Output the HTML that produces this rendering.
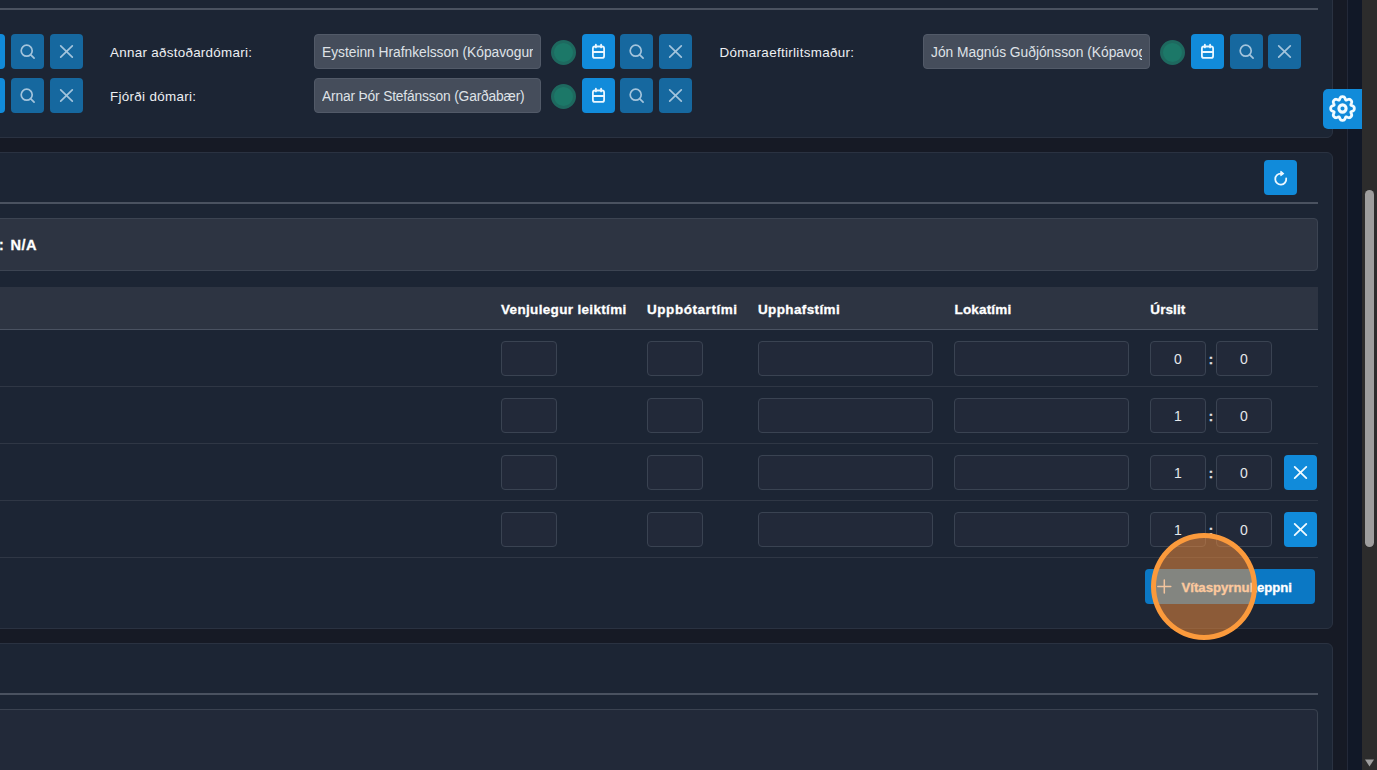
<!DOCTYPE html>
<html lang="is">
<head>
<meta charset="utf-8">
<title>Leikskýrsla</title>
<style>
*{box-sizing:border-box;margin:0;padding:0}
html,body{width:1377px;height:770px;overflow:hidden;background:#161a25}
body{position:relative;font-family:"Liberation Sans",sans-serif;color:#e5e7eb;font-size:13px}
.abs{position:absolute}
.card{position:absolute;left:-40px;width:1373px;background:#1c2534;border:1px solid #2a3241;border-radius:6px}
.hr{position:absolute;left:-40px;width:1358px;height:2px;background:#4a5260}
.gutter2{position:absolute;left:1347px;top:0;width:15px;height:770px;background:#111827;border-left:1px solid #232939}
.track{position:absolute;left:1362px;top:0;width:15px;height:770px;background:#2c2c2c}
.thumb{position:absolute;left:1365px;top:190px;width:9px;height:357px;border-radius:4.5px;background:#9e9e9e}
.btn{position:absolute;width:33px;height:35px;border-radius:4px;background:#118bda}
.btn.dim{background:#16689f}
.btn svg{position:absolute;left:0;top:0}
.lbl{position:absolute;font-size:13.4px;color:#eef0f3;white-space:nowrap;line-height:16px}
.dis{position:absolute;width:227px;height:35px;border-radius:4px;background:#454d5b;border:1px solid #525a68;color:#dfe2e7;font-size:13.8px;line-height:35px;padding:0 7px;white-space:nowrap}
.dis span{display:block;width:211px;overflow:hidden;white-space:nowrap}
.dot{position:absolute;width:25px;height:25px;border-radius:50%;background:#1c7868;border:3px solid #1e695f}
.box{position:absolute;background:#2d3442;border:1px solid #3c4452;border-radius:4px}
.th{position:absolute;font-weight:bold;font-size:13.5px;-webkit-text-stroke:0.3px #fff;color:#fff;white-space:nowrap;line-height:16px}
.inp{position:absolute;height:35px;border-radius:4px;background:#222939;border:1px solid #3a4352;color:#e5e7eb;font-size:14px;line-height:35px;text-align:center}
.sep{position:absolute;left:-40px;width:1358px;height:1px;background:#2f3745}
</style>
</head>
<body>
<!-- card 1 -->
<div class="card" style="top:-60px;height:198px"></div>
<div class="hr" style="top:8px"></div>
<div class="btn" style="left:-28px;top:34px"><svg width="33" height="35" viewBox="0 0 33 35" fill="none" stroke="#eaf7ff" stroke-width="1.8" stroke-linecap="round" stroke-linejoin="round"><rect x="10.9" y="12.5" width="11.2" height="11.4" rx="2"/><path d="M13.9 10.7V13.4M19.1 10.7V13.4M10.9 18H22.1"/></svg></div>
<div class="btn dim" style="left:11px;top:34px"><svg width="33" height="35" viewBox="0 0 33 35" fill="none" stroke="#a3c4dc" stroke-width="1.7" stroke-linecap="round"><circle cx="15.7" cy="16.7" r="5.5"/><path d="M19.8 20.8L23.1 24.1"/></svg></div>
<div class="btn dim" style="left:50px;top:34px"><svg width="33" height="35" viewBox="0 0 33 35" fill="none" stroke="#a3c4dc" stroke-width="1.7" stroke-linecap="round"><path d="M10.7 11.9L22.3 23.1M22.3 11.9L10.7 23.1"/></svg></div>
<div class="btn" style="left:582px;top:34px"><svg width="33" height="35" viewBox="0 0 33 35" fill="none" stroke="#eaf7ff" stroke-width="1.8" stroke-linecap="round" stroke-linejoin="round"><rect x="10.9" y="12.5" width="11.2" height="11.4" rx="2"/><path d="M13.9 10.7V13.4M19.1 10.7V13.4M10.9 18H22.1"/></svg></div>
<div class="btn dim" style="left:620px;top:34px"><svg width="33" height="35" viewBox="0 0 33 35" fill="none" stroke="#a3c4dc" stroke-width="1.7" stroke-linecap="round"><circle cx="15.7" cy="16.7" r="5.5"/><path d="M19.8 20.8L23.1 24.1"/></svg></div>
<div class="btn dim" style="left:659px;top:34px"><svg width="33" height="35" viewBox="0 0 33 35" fill="none" stroke="#a3c4dc" stroke-width="1.7" stroke-linecap="round"><path d="M10.7 11.9L22.3 23.1M22.3 11.9L10.7 23.1"/></svg></div>
<div class="dot" style="left:551px;top:39.5px"></div>
<div class="btn" style="left:-28px;top:78px"><svg width="33" height="35" viewBox="0 0 33 35" fill="none" stroke="#eaf7ff" stroke-width="1.8" stroke-linecap="round" stroke-linejoin="round"><rect x="10.9" y="12.5" width="11.2" height="11.4" rx="2"/><path d="M13.9 10.7V13.4M19.1 10.7V13.4M10.9 18H22.1"/></svg></div>
<div class="btn dim" style="left:11px;top:78px"><svg width="33" height="35" viewBox="0 0 33 35" fill="none" stroke="#a3c4dc" stroke-width="1.7" stroke-linecap="round"><circle cx="15.7" cy="16.7" r="5.5"/><path d="M19.8 20.8L23.1 24.1"/></svg></div>
<div class="btn dim" style="left:50px;top:78px"><svg width="33" height="35" viewBox="0 0 33 35" fill="none" stroke="#a3c4dc" stroke-width="1.7" stroke-linecap="round"><path d="M10.7 11.9L22.3 23.1M22.3 11.9L10.7 23.1"/></svg></div>
<div class="btn" style="left:582px;top:78px"><svg width="33" height="35" viewBox="0 0 33 35" fill="none" stroke="#eaf7ff" stroke-width="1.8" stroke-linecap="round" stroke-linejoin="round"><rect x="10.9" y="12.5" width="11.2" height="11.4" rx="2"/><path d="M13.9 10.7V13.4M19.1 10.7V13.4M10.9 18H22.1"/></svg></div>
<div class="btn dim" style="left:620px;top:78px"><svg width="33" height="35" viewBox="0 0 33 35" fill="none" stroke="#a3c4dc" stroke-width="1.7" stroke-linecap="round"><circle cx="15.7" cy="16.7" r="5.5"/><path d="M19.8 20.8L23.1 24.1"/></svg></div>
<div class="btn dim" style="left:659px;top:78px"><svg width="33" height="35" viewBox="0 0 33 35" fill="none" stroke="#a3c4dc" stroke-width="1.7" stroke-linecap="round"><path d="M10.7 11.9L22.3 23.1M22.3 11.9L10.7 23.1"/></svg></div>
<div class="dot" style="left:551px;top:83.5px"></div>
<div class="btn" style="left:1191px;top:34px"><svg width="33" height="35" viewBox="0 0 33 35" fill="none" stroke="#eaf7ff" stroke-width="1.8" stroke-linecap="round" stroke-linejoin="round"><rect x="10.9" y="12.5" width="11.2" height="11.4" rx="2"/><path d="M13.9 10.7V13.4M19.1 10.7V13.4M10.9 18H22.1"/></svg></div>
<div class="btn dim" style="left:1230px;top:34px"><svg width="33" height="35" viewBox="0 0 33 35" fill="none" stroke="#a3c4dc" stroke-width="1.7" stroke-linecap="round"><circle cx="15.7" cy="16.7" r="5.5"/><path d="M19.8 20.8L23.1 24.1"/></svg></div>
<div class="btn dim" style="left:1268px;top:34px"><svg width="33" height="35" viewBox="0 0 33 35" fill="none" stroke="#a3c4dc" stroke-width="1.7" stroke-linecap="round"><path d="M10.7 11.9L22.3 23.1M22.3 11.9L10.7 23.1"/></svg></div>
<div class="dot" style="left:1160px;top:39.5px"></div>
<div class="lbl" style="left:110px;top:45px;letter-spacing:0.290px">Annar aðstoðardómari:</div>
<div class="lbl" style="left:110px;top:89px;letter-spacing:0.317px">Fjórði dómari:</div>
<div class="lbl" style="left:719.6px;top:45px;letter-spacing:0.319px">Dómaraeftirlitsmaður:</div>
<div class="dis" style="left:314px;top:34px"><span style="display:block;letter-spacing:-0.025px">Eysteinn Hrafnkelsson (Kópavogur)</span></div>
<div class="dis" style="left:314px;top:78px"><span style="display:block;letter-spacing:-0.171px">Arnar Þór Stefánsson (Garðabær)</span></div>
<div class="dis" style="left:923px;top:34px"><span style="display:block;letter-spacing:-0.012px">Jón Magnús Guðjónsson (Kópavogur)</span></div>
<!-- card 2 -->
<div class="card" style="top:152px;height:477px"></div>
<div class="hr" style="top:202px"></div>
<div class="btn" style="left:1264px;top:160px"><svg width="33" height="35" viewBox="0 0 33 35" fill="none" stroke="#eaf7ff" stroke-width="1.8" stroke-linecap="round" stroke-linejoin="round"><path d="M22.2 18.4A5.5 5.5 0 1 1 16.9 13.6"/><path d="M16.9 11.4L19.6 13.6L16.9 15.6Z" fill="#eaf7ff" stroke-width="1.2"/></svg></div>
<div class="box" style="left:-40px;top:218px;width:1358px;height:53px"></div>
<div class="th" style="left:-1px;top:237px;font-size:14px">:</div>
<div class="th" style="left:10.4px;top:237px;font-size:14.6px;letter-spacing:0.486px">N/A</div>
<div class="abs" style="left:-40px;top:287px;width:1358px;height:43px;background:#2d3442;border-bottom:1px solid #4a5261"></div>
<div class="th" style="left:501px;top:302px;letter-spacing:0.332px">Venjulegur leiktími</div>
<div class="th" style="left:647px;top:302px;letter-spacing:0.550px">Uppbótartími</div>
<div class="th" style="left:758px;top:302px;letter-spacing:0.371px">Upphafstími</div>
<div class="th" style="left:954.5px;top:302px;letter-spacing:0.161px">Lokatími</div>
<div class="th" style="left:1150.3px;top:302px;letter-spacing:0.081px">Úrslit</div>
<div class="inp" style="left:501px;top:341px;width:56px"></div>
<div class="inp" style="left:647px;top:341px;width:56px"></div>
<div class="inp" style="left:758px;top:341px;width:175px"></div>
<div class="inp" style="left:954px;top:341px;width:175px"></div>
<div class="inp" style="left:1150px;top:341px;width:56px">0</div>
<div class="abs" style="left:1206px;top:352px;width:10px;text-align:center;font-size:13px;line-height:16px;font-weight:bold;-webkit-text-stroke:0.3px #e5e7eb;color:#e5e7eb">:</div>
<div class="inp" style="left:1216px;top:341px;width:56px">0</div>
<div class="sep" style="top:386px"></div>
<div class="inp" style="left:501px;top:398px;width:56px"></div>
<div class="inp" style="left:647px;top:398px;width:56px"></div>
<div class="inp" style="left:758px;top:398px;width:175px"></div>
<div class="inp" style="left:954px;top:398px;width:175px"></div>
<div class="inp" style="left:1150px;top:398px;width:56px">1</div>
<div class="abs" style="left:1206px;top:409px;width:10px;text-align:center;font-size:13px;line-height:16px;font-weight:bold;-webkit-text-stroke:0.3px #e5e7eb;color:#e5e7eb">:</div>
<div class="inp" style="left:1216px;top:398px;width:56px">0</div>
<div class="sep" style="top:443px"></div>
<div class="inp" style="left:501px;top:455px;width:56px"></div>
<div class="inp" style="left:647px;top:455px;width:56px"></div>
<div class="inp" style="left:758px;top:455px;width:175px"></div>
<div class="inp" style="left:954px;top:455px;width:175px"></div>
<div class="inp" style="left:1150px;top:455px;width:56px">1</div>
<div class="abs" style="left:1206px;top:466px;width:10px;text-align:center;font-size:13px;line-height:16px;font-weight:bold;-webkit-text-stroke:0.3px #e5e7eb;color:#e5e7eb">:</div>
<div class="inp" style="left:1216px;top:455px;width:56px">0</div>
<div class="sep" style="top:500px"></div>
<div class="btn" style="left:1284px;top:455px"><svg width="33" height="35" viewBox="0 0 33 35" fill="none" stroke="#f2fbff" stroke-width="1.8" stroke-linecap="round"><path d="M10.7 11.9L22.3 23.1M22.3 11.9L10.7 23.1"/></svg></div>
<div class="inp" style="left:501px;top:512px;width:56px"></div>
<div class="inp" style="left:647px;top:512px;width:56px"></div>
<div class="inp" style="left:758px;top:512px;width:175px"></div>
<div class="inp" style="left:954px;top:512px;width:175px"></div>
<div class="inp" style="left:1150px;top:512px;width:56px">1</div>
<div class="abs" style="left:1206px;top:523px;width:10px;text-align:center;font-size:13px;line-height:16px;font-weight:bold;-webkit-text-stroke:0.3px #e5e7eb;color:#e5e7eb">:</div>
<div class="inp" style="left:1216px;top:512px;width:56px">0</div>
<div class="sep" style="top:557px"></div>
<div class="btn" style="left:1284px;top:512px"><svg width="33" height="35" viewBox="0 0 33 35" fill="none" stroke="#f2fbff" stroke-width="1.8" stroke-linecap="round"><path d="M10.7 11.9L22.3 23.1M22.3 11.9L10.7 23.1"/></svg></div>
<div class="abs" style="left:1145px;top:569px;width:170px;height:35px;border-radius:4px;background:#0b78c4"><svg class="abs" style="left:12px;top:10px" width="15" height="15" viewBox="0 0 15 15" fill="none" stroke="#eaf7ff" stroke-width="1.5" stroke-linecap="round"><path d="M7.3 1V14M0.8 7.5H13.8"/></svg><span class="th" style="left:36.5px;top:10.5px;font-size:13.2px;letter-spacing:-0.010px">Vítaspyrnukeppni</span></div>
<div class="abs" style="left:1151.4px;top:533px;width:106px;height:107px;border-radius:50%;background:rgba(251,146,60,.5);border:5px solid #fb9a3c"></div>
<!-- card 3 -->
<div class="card" style="top:643px;height:200px"></div>
<div class="hr" style="top:693px"></div>
<div class="box" style="left:-40px;top:709px;width:1358px;height:100px;background:#222939;border-color:#3a4250"></div>
<!-- right gutter, settings tab, scrollbar -->
<div class="gutter2"></div>
<div class="abs" style="left:1323px;top:89px;width:39px;height:40px;background:#118bda;border-radius:5px 0 0 5px"></div>
<svg class="abs" style="left:1329.2px;top:95.3px" width="27" height="27" viewBox="0 0 27 27" fill="none" stroke="#f2fbff" stroke-width="2.8" stroke-linejoin="round"><path d="M13.50 1.70 L13.96 1.72 L14.42 1.79 L14.87 1.94 L15.28 2.23 L15.66 2.66 L15.97 3.22 L16.23 3.83 L16.46 4.40 L16.69 4.85 L16.98 5.09 L17.36 5.12 L17.84 4.98 L18.41 4.73 L19.03 4.48 L19.64 4.31 L20.21 4.27 L20.70 4.36 L21.13 4.57 L21.50 4.84 L21.84 5.16 L22.16 5.50 L22.43 5.87 L22.64 6.30 L22.73 6.79 L22.69 7.36 L22.52 7.97 L22.27 8.59 L22.02 9.16 L21.88 9.64 L21.91 10.02 L22.15 10.31 L22.60 10.54 L23.17 10.77 L23.78 11.03 L24.34 11.34 L24.77 11.72 L25.06 12.13 L25.21 12.58 L25.28 13.04 L25.30 13.50 L25.28 13.96 L25.21 14.42 L25.06 14.87 L24.77 15.28 L24.34 15.66 L23.78 15.97 L23.17 16.23 L22.60 16.46 L22.15 16.69 L21.91 16.98 L21.88 17.36 L22.02 17.84 L22.27 18.41 L22.52 19.03 L22.69 19.64 L22.73 20.21 L22.64 20.70 L22.43 21.13 L22.16 21.50 L21.84 21.84 L21.50 22.16 L21.13 22.43 L20.70 22.64 L20.21 22.73 L19.64 22.69 L19.03 22.52 L18.41 22.27 L17.84 22.02 L17.36 21.88 L16.98 21.91 L16.69 22.15 L16.46 22.60 L16.23 23.17 L15.97 23.78 L15.66 24.34 L15.28 24.77 L14.87 25.06 L14.42 25.21 L13.96 25.28 L13.50 25.30 L13.04 25.28 L12.58 25.21 L12.13 25.06 L11.72 24.77 L11.34 24.34 L11.03 23.78 L10.77 23.17 L10.54 22.60 L10.31 22.15 L10.02 21.91 L9.64 21.88 L9.16 22.02 L8.59 22.27 L7.97 22.52 L7.36 22.69 L6.79 22.73 L6.30 22.64 L5.87 22.43 L5.50 22.16 L5.16 21.84 L4.84 21.50 L4.57 21.13 L4.36 20.70 L4.27 20.21 L4.31 19.64 L4.48 19.03 L4.73 18.41 L4.98 17.84 L5.12 17.36 L5.09 16.98 L4.85 16.69 L4.40 16.46 L3.83 16.23 L3.22 15.97 L2.66 15.66 L2.23 15.28 L1.94 14.87 L1.79 14.42 L1.72 13.96 L1.70 13.50 L1.72 13.04 L1.79 12.58 L1.94 12.13 L2.23 11.72 L2.66 11.34 L3.22 11.03 L3.83 10.77 L4.40 10.54 L4.85 10.31 L5.09 10.02 L5.12 9.64 L4.98 9.16 L4.73 8.59 L4.48 7.97 L4.31 7.36 L4.27 6.79 L4.36 6.30 L4.57 5.87 L4.84 5.50 L5.16 5.16 L5.50 4.84 L5.87 4.57 L6.30 4.36 L6.79 4.27 L7.36 4.31 L7.97 4.48 L8.59 4.73 L9.16 4.98 L9.64 5.12 L10.02 5.09 L10.31 4.85 L10.54 4.40 L10.77 3.83 L11.03 3.22 L11.34 2.66 L11.72 2.23 L12.13 1.94 L12.58 1.79 L13.04 1.72Z"/><circle cx="13.5" cy="13.5" r="3.6" stroke-width="3.1"/></svg>
<div class="track"></div>
<div class="thumb"></div>
<svg class="abs" style="left:1365px;top:758.5px" width="9" height="8" viewBox="0 0 9 8"><path d="M0 0.5H9L4.5 7.5Z" fill="#9e9e9e"/></svg>
</body>
</html>
